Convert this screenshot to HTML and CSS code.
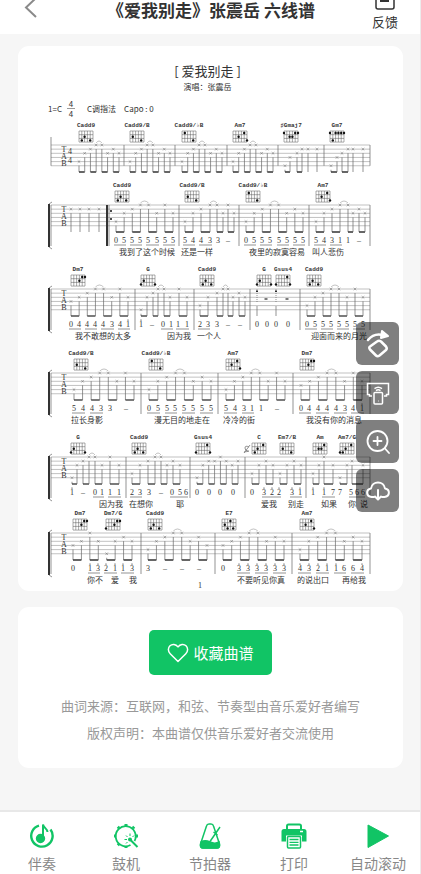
FILE: index.html
```
<!DOCTYPE html>
<html lang="zh-CN">
<head>
	<meta charset="utf-8">
	<meta name="viewport" content="width=device-width, initial-scale=1">
	<title>《爱我别走》张震岳 六线谱</title>
	<link rel="stylesheet" href="styles.css">
</head>
<body>
	<header class="topbar">
		<button class="back" aria-label="返回">
			<svg width="14" height="22" viewBox="0 0 14 22"><path d="M12 1L2 10.500L12 20" fill="none" stroke="#8a8a8a" stroke-width="2"/></svg>
		</button>
		<h1>《爱我别走》张震岳 六线谱</h1>
		<button class="feedback">
			<svg width="20" height="20" viewBox="0 0 20 20" fill="none" stroke="#333" stroke-width="1.500"><rect x="1" y="1" width="18" height="18" rx="2"/><path d="M5 6h10M5 11h9" stroke-width="2"/></svg>
			<span>反馈</span>
		</button>
	</header>

	<main>
		<section class="card sheet">
			<div class="sheet-head">
				<h2>[ 爱我别走 ]</h2>
				<p>演唱：张震岳</p>
			</div>
			<div class="sheet-key">
				<span class="key">1=C</span>
				<span class="meter"><span>4</span><span>4</span></span>
				<span>C调指法</span>
				<span class="capo">Capo : 0</span>
			</div>
			<svg class="score" id="score" viewBox="18 118 385 473"></svg>
		</section>

		<section class="card info">
			<button class="collect">
				<svg width="22" height="20" viewBox="0 0 22 20"><path d="M11 18.500L3.200 10.700C.8 8.300 .8 4.800 3 2.700C5.200 .7 8.700 .9 11 3.900C13.300 .9 16.800 .7 19 2.700C21.200 4.800 21.200 8.300 18.800 10.700Z" fill="none" stroke="#fff" stroke-width="1.500" stroke-linejoin="round"/></svg>
				<span>收藏曲谱</span>
			</button>
			<p>曲词来源：互联网，和弦、节奏型由音乐爱好者编写</p>
			<p>版权声明：本曲谱仅供音乐爱好者交流使用</p>
		</section>
	</main>

	<div class="tools">
		<button aria-label="旋转">
			<svg width="28" height="30" viewBox="0 0 28 30" fill="none" stroke="#fff" stroke-width="2" stroke-linecap="round" stroke-linejoin="round">
				<path d="M4 11C8 6 13 4.500 19 6" stroke-width="2.500"/>
				<path d="M18 2L24 7L17 9Z" fill="#fff"/>
				<path d="M13 12.500Q15 11 17 12.500L22 17.500Q23.500 19.500 22 21L15.500 26.500Q13.500 28 12 26.500L6 20.500Q4.500 18.500 6 17.500Z" stroke-width="2.500"/>
			</svg>
		</button>
		<button aria-label="投屏">
			<svg width="26" height="26" viewBox="0 0 26 26" fill="none" stroke="#fff" stroke-width="1.500">
				<path d="M7 16H4.500V14.500H2.500V3.500H23.500V14.500H21.500V16H19"/>
				<rect x="9" y="12.500" width="8.500" height="11.500" rx="1"/>
				<path d="M13 21h.5M9.500 8.700Q13.200 6 17 8.700M11 10.700Q13.200 9 15.500 10.700"/>
			</svg>
		</button>
		<button aria-label="放大">
			<svg width="26" height="26" viewBox="0 0 26 26" fill="none" stroke="#fff" stroke-width="1.800" stroke-linecap="round">
				<circle cx="12.500" cy="12" r="10"/><path d="M20 19.500L24 24M12.500 8v8M8.500 12h8"/>
			</svg>
		</button>
		<button aria-label="下载">
			<svg width="26" height="22" viewBox="0 0 26 22" fill="none" stroke="#fff" stroke-width="2" stroke-linecap="round" stroke-linejoin="round">
				<path d="M9 17H6.500C1 16.500 .5 9.500 6 8.500C7 .5 19 .5 20 8.500C25.500 9.500 25 16.500 19.500 17H17"/><path d="M13 10v9M10 16.500L13 19.500L16 16.500"/>
			</svg>
		</button>
	</div>

	<nav class="tabbar">
		<a href="#accompany">
			<svg width="26" height="26" viewBox="0 0 26 26" fill="none" stroke="#11c465" stroke-width="2.400">
				<path d="M10 2.600A10.700 10.700 0 1 0 21.500 6.500"/>
				<path d="M14 15.500V1.500C14.500 5 18.500 5.500 18.500 9" stroke-width="2"/>
				<circle cx="11.500" cy="15.500" r="3.500" fill="#11c465"/>
			</svg>
			<span>伴奏</span>
		</a>
		<a href="#drum">
			<svg width="26" height="26" viewBox="0 0 26 26" fill="none" stroke="#11c465" stroke-width="1.800">
				<path d="M21.500 18A10 10 0 1 0 17.500 22"/>
				<path d="M11.500 2h3M4.500 5.500l2-2M19.500 3.500l2 2M2 11.500v3M24 11.500v3M4.500 20.500l2 2M11.500 24h3" stroke-width="2"/>
				<circle cx="17" cy="16.500" r="2" fill="#11c465" stroke="none"/><path d="M17 16.500L24.500 24" stroke-width="2"/>
				<path d="M17 10.500v2.500M11.500 16.500h2.500M13 12.500l1.500 1.500M21 12.500l-1.500 1.500M13 20.500l1.500-1.500" stroke-width="1"/>
			</svg>
			<span>鼓机</span>
		</a>
		<a href="#metronome">
			<svg width="26" height="26" viewBox="0 0 26 26" fill="none" stroke="#11c465" stroke-width="1.500">
				<path d="M3.500 21L9.500 3Q10 1 12 1H14Q16 1 16.500 3L22.500 21Q23 25 20 25H6Q3 25 3.500 21Z"/>
				<path d="M4 19Q8 16.500 13 19T22 19L22.500 22Q22.500 25 20 25H6Q3.500 25 3.500 22Z" fill="#11c465"/>
				<path d="M13 18.500L23 4M16.500 9L20.500 12"/>
			</svg>
			<span>节拍器</span>
		</a>
		<a href="#print">
			<svg width="26" height="26" viewBox="0 0 26 26">
				<path d="M6 6V3Q6 1.500 7.500 1.500H18.500Q20 1.500 20 3V6" fill="none" stroke="#11c465" stroke-width="2"/>
				<path d="M3 6H23Q25.500 6 25.500 8.500V18.500H21V12.500H5V18.500H.5V8.500Q.5 6 3 6Z" fill="#11c465"/>
				<path d="M19 8.500h3" stroke="#fff" stroke-width="1.500"/>
				<rect x="6.500" y="13.500" width="13" height="11.500" rx="1" fill="#fff" stroke="#11c465" stroke-width="1.500"/>
				<path d="M8.500 16.500h9M8.500 19.300h9M8.500 22h9" stroke="#11c465" stroke-width="1.300"/>
			</svg>
			<span>打印</span>
		</a>
		<a href="#scroll">
			<svg width="26" height="26" viewBox="0 0 26 26"><path d="M3 2L23.500 13L3 24.500Z" fill="#11c465" stroke="#11c465" stroke-linejoin="round"/></svg>
			<span>自动滚动</span>
		</a>
	</nav>

	<script src="score.js"></script>
</body>
</html>
```
FILE: styles.css
```
* {
	box-sizing: border-box;
}

body {
	margin: 0;
	min-height: 100vh;
	background-color: #f6f6f6;
	border-right: 1px solid #ececec;
	font-family: "Noto Sans CJK SC", sans-serif;
	color: #333;
}

h1, h2, p {
	margin: 0;
}

button {
	border: none;
	padding: 0;
	background: none;
	font-family: inherit;
	color: inherit;
	cursor: pointer;
}

svg {
	display: block;
}

.topbar {
	display: grid;
	grid-template-columns: 1fr auto 1fr;
	grid-template-rows: 100%;
	align-items: end;
	height: 34px;
	padding: 0 22px 3px 24px;
	background-color: #fff;
	overflow: hidden;
}

.topbar h1 {
	font-size: 17px;
	font-weight: bold;
	line-height: 20px;
	padding-bottom: 11px;
}

.back {
	justify-self: start;
	padding-bottom: 12px;
}

.feedback {
	justify-self: end;
	display: flex;
	flex-direction: column;
	align-items: center;
	gap: 3px;
	font-size: 13px;
	line-height: 18px;
}

main {
	display: flex;
	flex-direction: column;
	gap: 16px;
	padding: 12px 17px 106px 18px;
}

.card {
	background-color: #fff;
	border-radius: 11px;
}

.sheet {
	padding-top: 16px;
	overflow: hidden;
}

.sheet-head {
	padding-right: 6px;
	text-align: center;
}

.sheet-head h2 {
	font-size: 13px;
	font-weight: 400;
	line-height: 18px;
}

.sheet-head p {
	font-size: 8px;
	line-height: 13px;
}

.sheet-key {
	display: flex;
	align-items: center;
	height: 19px;
	margin: 6px 30px 0;
	font-size: 8px;
	line-height: 9px;
}

.meter {
	display: flex;
	flex-direction: column;
	width: 8px;
	margin: 0 12px 0 5px;
	text-align: center;
}

.meter span:first-child {
	border-bottom: 1px solid #999;
}

.capo {
	margin-left: 8px;
}

.score {
	width: 100%;
	height: auto;
}

.score .line {
	stroke: #999;
	stroke-width: 0.6;
	fill: none;
}

.score .bar {
	stroke: #666;
	stroke-width: 0.7;
}

.score .thick {
	stroke: #333;
	stroke-width: 2;
}

.score .stem {
	stroke: #666;
	stroke-width: 0.7;
}

.score .beam {
	stroke: #333;
	stroke-width: 1.3;
}

.score .cross {
	stroke: #666;
	stroke-width: 0.5;
}

.score .grid {
	stroke: #555;
	stroke-width: 0.5;
	fill: none;
}

.score .dot {
	fill: #111;
}

.score text {
	fill: #333;
	text-anchor: middle;
}

.score .chord {
	font-family: "Liberation Mono", monospace;
	font-size: 6px;
	font-weight: bold;
}

.score .tab,
.score .num {
	font-family: "Liberation Serif", serif;
	font-size: 8px;
}

.score .lyric {
	font-family: "Noto Sans CJK SC", sans-serif;
	font-size: 8px;
	text-anchor: start;
}

.info {
	display: flex;
	flex-direction: column;
	align-items: center;
	padding: 23px 16px 22px;
	font-size: 13px;
	line-height: 27px;
	color: #999;
	text-align: center;
}

.collect {
	display: flex;
	align-items: center;
	gap: 4px;
	padding: 0 18px;
	height: 45px;
	margin-bottom: 17px;
	border-radius: 5px;
	background-color: #11c465;
	color: #fff;
	font-size: 15px;
}

.tools {
	position: fixed;
	top: 322px;
	right: 22px;
	display: flex;
	flex-direction: column;
	gap: 6px;
}

.tools button {
	display: flex;
	align-items: center;
	justify-content: center;
	width: 43px;
	height: 43px;
	border-radius: 6px;
	background-color: rgba(0, 0, 0, 0.5);
}

.tabbar {
	position: fixed;
	left: 0;
	right: 1px;
	bottom: 0;
	display: grid;
	grid-template-columns: repeat(5, 1fr);
	height: 64px;
	padding-top: 11px;
	border-top: 2px solid #e8e8e8;
	background-color: #fff;
}

.tabbar a {
	display: flex;
	flex-direction: column;
	align-items: center;
	gap: 4px;
	color: #888;
	font-size: 14px;
	line-height: 20px;
	text-decoration: none;
}
```
FILE: score.js
```
// dots on each chord box: [string, fret]
const shapes = {
	'Cadd9': [[1, 2], [2, 1], [4, 2]],
	'Cadd9/B': [[1, 1], [4, 2]],
	'Cadd9/♭B': [[1, 0], [4, 2]],
	'Am7': [[2, 1], [4, 0], [5, 2]],
	'♯Gmaj7': [[0, 0], [2, 1], [3, 1], [4, 0], [5, 0]],
	'Gm7': [[0, 0], [1, 2], [2, 0], [3, 0], [4, 0], [5, 0]],
	'Dm7': [[3, 1], [4, 0], [5, 0]],
	'Dm7/G': [[0, 2], [3, 1], [4, 0], [5, 0]],
	'G': [[0, 2], [1, 1], [5, 2]],
	'Gsus4': [[0, 2], [4, 0], [5, 2]],
	'C': [[1, 2], [2, 1], [4, 0]],
	'Em7/B': [[1, 1], [4, 2]],
	'Am': [[2, 1], [3, 1], [4, 0]],
	'Am7/G': [[0, 2], [1, 2], [2, 1], [4, 0]],
	'E7': [[1, 1], [2, 2], [3, 0], [4, 2]]
};

// notes: [x positions or first/last x, strings from the top line]
// nums: [x, digit], an apostrophe is the octave dot
const systems = [
	{
		top: 145, first: true,
		chords: [[86, 'Cadd9'], [137, 'Cadd9/B'], [189, 'Cadd9/♭B'], [240, 'Am7'], [291, '♯Gmaj7'], [337, 'Gm7']],
		bars: [124, 175, 227, 278, 324, 370],
		notes: [[[79, 119], '42100212'], [[130, 170], '42100212'], [[182, 222], '42100212'], [[233, 273], '42100212'], [[285, 290, 297, 302, 308, 317], '532111', 4], [[331, 337, 342, 348, 353, 363], '532111', 4]],
		nums: [], lines: [], lyrics: []
	},
	{
		top: 205, repeat: 108,
		chords: [[122, 'Cadd9'], [192, 'Cadd9/B'], [253, 'Cadd9/♭B'], [323, 'Am7']],
		bars: [179, 239, 309, 370],
		notes: [[[71, 80, 89, 99], '1111', 0], [[116, 173], '42100202'], [[185, 193, 201, 210, 217, 223, 228, 234], '42100202'], [[246, 303], '42100212'], [[316, 324, 332, 340, 348, 353, 359, 365], '42100212']],
		nums: [[116, 0], [124, 5], [132, 5], [140, 5], [148, 5], [157, 5], [165, 5], [173, 5], [185, 5], [193, 4], [201, 4], [210, 3], [218, 3], [228, '–'], [246, 0], [254, 5], [262, 5], [270, 5], [279, 5], [287, 5], [295, 5], [303, 5], [316, 5], [324, 4], [332, 3], [340, 1], [348, 1], [359, '–']],
		lines: [[114, 126], [130, 142], [146, 159], [163, 175], [183, 195], [199, 212], [244, 256], [260, 272], [277, 289], [293, 305], [314, 326], [330, 342]],
		lyrics: [[119, '我到了这个时候'], [181, '还是一样'], [249, '夜里的寂寞容易'], [312, '叫人悲伤']]
	},
	{
		top: 289,
		chords: [[78, 'Dm7'], [148, 'G'], [207, 'Cadd9'], [264, 'G'], [283, 'Gsus4'], [314, 'Cadd9']],
		bars: [135, 194, 250, 300, 370],
		notes: [[[71, 128], '32100202'], [[141, 147, 153, 158, 164, 170, 179, 187], '52100202'], [[200, 208, 217, 223, 228, 233, 239, 245], '42100212'], [[307, 363], '42100202']],
		arrows: [257, 276], rests: [266, 287],
		nums: [[71, 0], [79, 4], [87, 4], [95, 4], [103, 4], [112, 3], [120, 4], [128, "1'"], [141, "1'"], [152, '–'], [163, 0], [171, 1], [178, 1], [187, 1], [200, 2], [208, 3], [217, 3], [228, '–'], [240, '–'], [257, 0], [267, 0], [276, 0], [288, 0], [307, 0], [315, 5], [323, 5], [331, 5], [339, 5], [347, 5], [355, 5], [363, 5]],
		lines: [[69, 81], [85, 97], [101, 114], [118, 130], [161, 173], [176, 189], [198, 210], [305, 317], [321, 333], [337, 349], [353, 365]],
		lyrics: [[75, '我不敢想的太多'], [167, '因为我'], [197, '一个人'], [311, '迎面而来的月光']]
	},
	{
		top: 373,
		chords: [[81, 'Cadd9/B'], [156, 'Cadd9/♭B'], [233, 'Am7'], [307, 'Dm7']],
		bars: [141, 218, 293, 370],
		notes: [[[74, 134], '42100202'], [[149, 211], '42100212'], [[226, 285], '42100202'], [[301, 362], '32100202']],
		nums: [[74, 5], [83, 4], [92, 4], [101, 3], [110, 3], [126, '–'], [149, 0], [158, 5], [167, 5], [175, 5], [184, 5], [193, 5], [202, 5], [211, 5], [226, 5], [235, 4], [244, 3], [252, 1], [261, 1], [277, '–'], [301, 0], [309, 4], [318, 4], [327, 4], [336, 4], [345, 3], [353, 4], [362, "1'"]],
		lines: [[72, 85], [90, 103], [147, 160], [165, 177], [182, 195], [200, 213], [224, 237], [242, 254], [299, 311], [316, 329], [334, 347], [351, 364]],
		lyrics: [[71, '拉长身影'], [154, '漫无目的地走在'], [223, '冷冷的街'], [306, '我没有你的消息']]
	},
	{
		top: 457, segno: 246,
		chords: [[78, 'G'], [139, 'Cadd9'], [203, 'Gsus4'], [259, 'C'], [287, 'Em7/B'], [320, 'Am'], [347, 'Am7/G']],
		bars: [126, 190, 245, 306, 370],
		notes: [[[72, 77, 83, 89, 95, 102, 110, 119], '52100202'], [[132, 140, 148, 155, 161, 167, 173, 180], '42100212'], [[197, 238], '52110121'], [[252, 301], '42124212'], [[313, 319, 324, 333, 340, 347, 352, 363], '42025212']],
		nums: [[72, "1'"], [83, '–'], [95, 0], [102, 1], [110, 1], [119, 1], [132, 2], [140, 3], [149, 3], [161, '–'], [172, 0], [180, 5], [186, 6], [197, 0], [209, 0], [220, 0], [233, 0], [252, 0], [264, "3'"], [272, "2'"], [279, "2'"], [292, "3'"], [300, "1'"], [313, "1'"], [324, "1'"], [333, 7], [340, 7], [351, 5], [357, 6], [363, 6]],
		lines: [[93, 104], [108, 121], [130, 142], [170, 188], [262, 281], [290, 302], [322, 335], [349, 365]],
		lyrics: [[99, '因为我'], [129, '在想你'], [176, '耶'], [261, '爱我'], [288, '别走'], [321, '如果'], [348, '你'], [360, '说']]
	},
	{
		top: 533,
		chords: [[80, 'Dm7'], [113, 'Dm7/G'], [155, 'Cadd9'], [229, 'E7'], [307, 'Am7']],
		bars: [141, 215, 292, 370],
		notes: [[[73, 132], '32025212'], [[148, 207], '42100213'], [[223, 284], '32100212'], [[300, 362], '42100212']],
		nums: [[73, 0], [90, "1'"], [98, "3'"], [106, "2'"], [115, "1'"], [123, "1'"], [132, "3'"], [148, 3], [165, '–'], [182, '–'], [199, '–'], [223, 0], [239, "3'"], [248, "3'"], [257, "3'"], [266, "3'"], [275, "3'"], [284, "3'"], [300, "4'"], [309, "3'"], [318, "2'"], [327, "1'"], [336, "1'"], [344, 6], [353, 6], [362, "4'"]],
		lines: [[88, 100], [104, 117], [121, 134], [237, 250], [255, 268], [273, 286], [298, 311], [316, 329], [334, 346], [351, 364]],
		lyrics: [[87, '你不'], [111, '爱'], [129, '我'], [237, '不要听见你真'], [297, '的说出口'], [342, '再给我']]
	}
];

const GAP = 4.15;
let out = '';

function line(cls, x1, y1, x2, y2) {
	out += `<path class="${cls}" d="M${x1} ${y1}L${x2} ${y2}"/>`;
}

function text(cls, x, y, str) {
	out += `<text class="${cls}" x="${x}" y="${y}">${str}</text>`;
}

function spread(xs, n) {
	if (xs.length === n) return xs;
	return Array.from({ length: n }, (_, i) => xs[0] + (xs[1] - xs[0]) * i / (n - 1));
}

function chordBox(x, top, name) {
	text('chord', x, top - 18, name);
	const left = x - 7;
	const y = top - 14;
	for (let i = 0; i < 6; i++) line('grid', left + i * 2.8, y, left + i * 2.8, y + 11);
	for (let i = 0; i < 4; i++) line('grid', left, y + i * 3.7, left + 14, y + i * 3.7);
	shapes[name].forEach(([s, f]) => {
		out += `<circle class="dot" cx="${left + s * 2.8}" cy="${y + f * 3.7 + 2}" r="1.2"/>`;
	});
}

systems.forEach(sys => {
	const top = sys.top;
	const bottom = top + GAP * 5;
	const barEnd = sys.first ? bottom : top + 41;

	// staff
	for (let i = 0; i < 6; i++) line('line', 51, top + i * GAP, 370, top + i * GAP);
	['T', 'A', 'B'].forEach((c, i) => text('tab', 64, top + 7 + i * 7, c));
	if (sys.first) {
		line('bar', 51, top - 8, 51, bottom);
		text('tab', 70, top + 9, '4');
		text('tab', 70, top + 18, '4');
	} else {
		line('thick', 49, top - 1, 49, barEnd + 1);
		line('bar', 51, top, 51, barEnd);
		line('bar', 49, top - 1, 52, top - 3);
		line('bar', 49, barEnd + 1, 52, barEnd + 3);
	}
	sys.bars.forEach(x => line('bar', x, top, x, barEnd));
	if (sys.repeat) {
		line('thick', sys.repeat - 1, top, sys.repeat - 1, barEnd);
		line('bar', sys.repeat + 1, top, sys.repeat + 1, barEnd);
		out += `<circle class="dot" cx="${sys.repeat + 3}" cy="${top + 6}" r="1"/><circle class="dot" cx="${sys.repeat + 3}" cy="${top + 14}" r="1"/>`;
	}
	if (sys.segno) {
		out += `<path class="bar" fill="none" d="M${sys.segno + 3} ${top - 10}q-4 -2 -4 1t3 3t-4 1M${sys.segno - 2} ${top - 4}l6 -8"/>`;
	}

	// notes, stems and beams
	sys.notes.forEach(([xs, strings, beamed = 8]) => {
		const pos = spread(xs, strings.length);
		pos.forEach((x, i) => {
			const y = top + strings[i] * GAP;
			line('cross', x - 1.3, y - 1.3, x + 1.3, y + 1.3);
			line('cross', x - 1.3, y + 1.3, x + 1.3, y - 1.3);
			line('stem', x, y + 4, x, top + 27);
			if (i % 2 === 0 && i < beamed) line('beam', x, top + 27, pos[i + 1], top + 27);
		});
		// tie over the two notes on the top string
		const t = strings.indexOf('00');
		if (t >= 0) out += `<path class="line" d="M${pos[t]} ${top - 2}q${(pos[t + 1] - pos[t]) / 2} -4 ${pos[t + 1] - pos[t]} 0"/>`;
	});
	(sys.arrows || []).forEach(x => {
		out += `<path class="bar" stroke-dasharray="1 1" d="M${x} ${top + 2}V${top + 14}"/><path class="dot" d="M${x - 1} ${top + 3}l1 -3l1 3z"/>`;
		line('stem', x, top + 17, x, top + 27);
	});
	(sys.rests || []).forEach(x => line('beam', x - 1.5, top + 10, x + 1.5, top + 10));

	sys.chords.forEach(([x, name]) => chordBox(x, top, name));
	sys.nums.forEach(([x, n]) => {
		text('num', x, top + 38, String(n)[0]);
		if (String(n)[1]) out += `<circle class="dot" cx="${x}" cy="${top + 31}" r="0.6"/>`;
	});
	sys.lines.forEach(([a, b]) => line('bar', a, top + 40, b, top + 40));
	sys.lyrics.forEach(([x, str]) => text('lyric', x, top + 50, str));
});

text('num', 200, 588, '1');
document.getElementById('score').innerHTML = out;
```
